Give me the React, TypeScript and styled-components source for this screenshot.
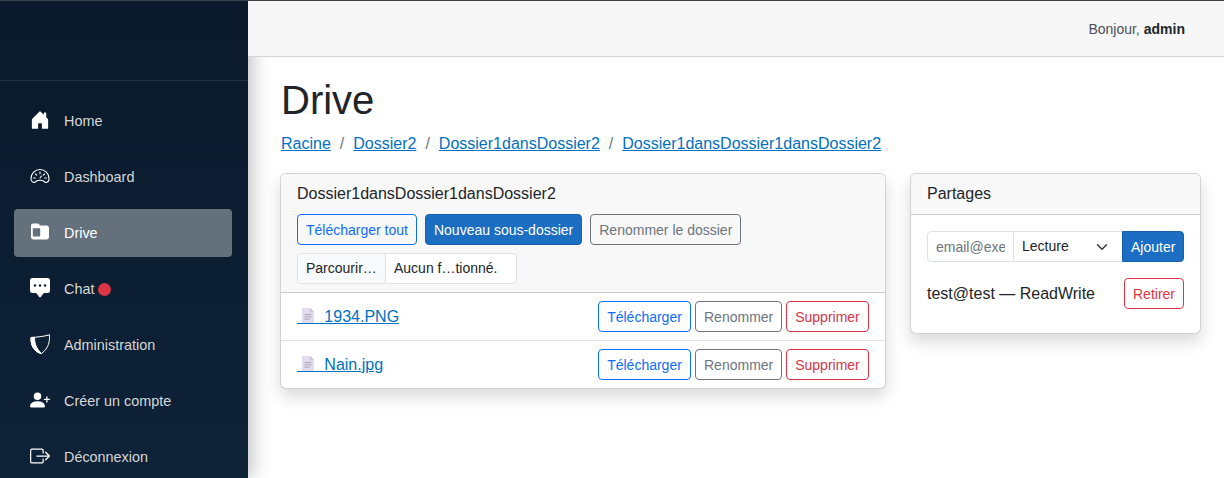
import { createGlobalStyle, styled } from 'styled-components';
import {
  BsBoxArrowRight,
  BsChatSquareDotsFill,
  BsHouseDoorFill,
  BsPersonPlusFill,
} from 'react-icons/bs';

const GlobalStyle = createGlobalStyle`
  html, body {
    margin: 0;
    height: 100%;
    overflow: hidden;
  }
  body {
    font-family: "Liberation Sans", Arial, sans-serif;
    font-size: 16px;
    line-height: 1.5;
    color: #212529;
    background: #fff;
  }
  * {
    box-sizing: border-box;
  }
`;

const Page = styled.div`
  display: flex;
  height: 478px;
  border-top: 1px solid #3a3f45;
  overflow: hidden;
`;

const Sidebar = styled.aside`
  position: relative;
  z-index: 1;
  flex: 0 0 248px;
  background: linear-gradient(180deg, #0a192b 0%, #0e2238 100%);
  box-shadow: 4px 0 18px rgba(0, 0, 0, 0.25);
`;

const Brand = styled.div`
  height: 80px;
  border-bottom: 1px solid rgba(255, 255, 255, 0.1);
`;

const Nav = styled.nav`
  display: flex;
  flex-direction: column;
  gap: 8px;
  padding: 16px 16px 0 14px;
`;

const NavItem = styled.a<{ $active?: boolean }>`
  display: flex;
  align-items: center;
  height: 48px;
  padding: 2px 0 0 16px;
  border-radius: 4px;
  font-size: 14.4px;
  color: ${(p) => (p.$active ? '#fff' : '#d7d7d7')};
  background: ${(p) => (p.$active ? 'rgba(255, 255, 255, 0.37)' : 'transparent')};
  text-decoration: none;
  svg {
    flex: none;
    width: 20px;
    height: 20px;
    margin: 0 14px 4px 0;
    color: #fff;
  }
`;

const Dot = styled.span`
  width: 13px;
  height: 13px;
  margin: 0 0 2px 4px;
  border-radius: 50%;
  background: #dc3545;
`;

const Content = styled.div`
  flex: 1;
  min-width: 0;
`;

const Topbar = styled.header`
  position: relative;
  z-index: 2;
  display: flex;
  align-items: center;
  justify-content: flex-end;
  height: 56px;
  padding: 2px 39px 0 0;
  background: #f7f7f7;
  border-bottom: 1px solid #d6d5d5;
  font-size: 14px;
  color: #495057;
  strong {
    margin-left: 4px;
    color: #212529;
  }
`;

const Main = styled.main`
  padding: 19px 23px 0 32px;
`;

const Title = styled.h1`
  margin: 0 0 8px;
  padding-left: 1px;
  font-size: 40px;
  font-weight: 500;
  line-height: 48px;
  color: #212529;
`;

const Crumbs = styled.ol`
  display: flex;
  margin: 0 0 17px;
  padding: 0 0 0 1px;
  list-style: none;
`;

const Crumb = styled.li`
  & + & {
    padding-left: 9px;
  }
  & + &::before {
    content: '/';
    padding-right: 9px;
    color: #6c757d;
  }
`;

const Link = styled.a`
  color: #0071c1;
  text-decoration: underline;
`;

const Columns = styled.div`
  display: grid;
  grid-template-columns: 606px 291px;
  gap: 24px;
  align-items: start;
`;

const Card = styled.section`
  border: 1px solid rgba(0, 0, 0, 0.175);
  border-radius: 6px;
  background: #fff;
  box-shadow: 0 8px 16px rgba(0, 0, 0, 0.15);
`;

const CardHeader = styled.div`
  padding: 8px 16px;
  background: #f8f8f8;
  border-bottom: 1px solid rgba(0, 0, 0, 0.175);
  border-radius: 5px 5px 0 0;
`;

const FolderName = styled.div`
  margin-bottom: 8px;
`;

const Toolbar = styled.div`
  display: flex;
  gap: 8px;
  margin-bottom: 8px;
`;

const Button = styled.button<{ $tone: 'primary' | 'outline' | 'muted' | 'danger' }>`
  height: 31px;
  padding: 0 8px;
  border-radius: 4px;
  font-family: inherit;
  font-size: 14px;
  line-height: 1;
  white-space: nowrap;
  background: ${(p) => (p.$tone === 'primary' ? '#1b6ec2' : 'transparent')};
  border: 1px solid
    ${(p) =>
      p.$tone === 'primary'
        ? '#1861ac'
        : p.$tone === 'outline'
          ? '#0d6efd'
          : p.$tone === 'muted'
            ? '#6c757d'
            : '#dc3545'};
  color: ${(p) =>
    p.$tone === 'primary'
      ? '#fff'
      : p.$tone === 'outline'
        ? '#0d6efd'
        : p.$tone === 'muted'
          ? '#6c757d'
          : '#dc3545'};
`;

const FilePicker = styled.div`
  display: flex;
  width: 220px;
  height: 31px;
  border: 1px solid #dee2e6;
  border-radius: 4px;
  background: #fff;
  font-size: 14px;
  line-height: 29px;
`;

const PickerButton = styled.span`
  width: 88px;
  padding-left: 8px;
  background: #f8f9fa;
  border-right: 1px solid #dee2e6;
  border-radius: 3px 0 0 3px;
`;

const PickerName = styled.span`
  padding-left: 8px;
`;

const FileRow = styled.div`
  display: flex;
  align-items: center;
  justify-content: space-between;
  padding: 8px 16px;
  & + & {
    border-top: 1px solid #dee2e6;
  }
`;

const IconSlot = styled.span`
  position: relative;
  letter-spacing: 22.9px;
  svg {
    position: absolute;
    left: 5px;
    top: 0;
    width: 12px;
    height: 15px;
  }
`;

const Actions = styled.div`
  display: grid;
  grid-template-columns: 93px 87px 83px;
  gap: 4px;
`;

const ShareHeader = styled.div`
  padding: 8px 16px;
  height: 41px;
  background: #f8f8f8;
  border-bottom: 1px solid rgba(0, 0, 0, 0.175);
  border-radius: 5px 5px 0 0;
`;

const ShareBody = styled.div`
  padding: 16px;
`;

const ShareForm = styled.div`
  display: grid;
  grid-template-columns: 87px 1fr 62px;
  height: 31px;
  margin-bottom: 16px;
`;

const EmailField = styled.input`
  min-width: 0;
  padding: 0 8px;
  border: 1px solid #dee2e6;
  border-radius: 4px 0 0 4px;
  font-family: inherit;
  font-size: 14px;
  color: #212529;
  &::placeholder {
    color: #6c757d;
    opacity: 1;
  }
`;

const RoleSelect = styled.div`
  display: flex;
  align-items: center;
  justify-content: space-between;
  padding: 0 12px 0 8px;
  border: 1px solid #dee2e6;
  border-width: 1px 0;
  font-size: 14px;
  svg {
    width: 16px;
    height: 12px;
    color: #343a40;
  }
`;

const AddButton = styled(Button)`
  border-radius: 0 4px 4px 0;
`;

const ShareRow = styled.div`
  display: flex;
  align-items: center;
  justify-content: space-between;
  margin-bottom: 8px;
`;

function GaugeIcon() {
  return (
    <svg viewBox="0 0 20 20" fill="none" stroke="currentColor" strokeWidth="1.1" strokeLinecap="round">
      <path d="M4.500 16.500C2.500 16.500 1 15 1 12.500C1 7.500 5 3.500 10 3.500S19 7.500 19 12.500C19 15 17.500 16.500 15.500 16.500C14 15 12 14.300 10 14.300S6 15 4.500 16.500Z" />
      <path d="M10 6v1.800M5.500 8l1.200 1.200M14.500 8l-1.200 1.200M3.600 12h1.700M16.400 12h-1.700M10 12l1.500-2" />
    </svg>
  );
}

function FolderIcon() {
  return (
    <svg viewBox="0 0 20 20" fill="currentColor">
      <path
        fillRule="evenodd"
        d="M1 3.500C1 2.200 2 1.500 3.200 1.500h4.300c.9 0 1.500.4 2 1.200l.5.800h6.500C18 3.500 19 4.500 19 6v9c0 1.500-1 2.500-2.500 2.500h-13C2 17.500 1 16.500 1 15zM2.800 6.500v6.800c0 .8.4 1.200 1.200 1.200h5c.8 0 1.200-.4 1.200-1.200V7.200c0-.7-.4-1-1-1H3.200c-.3 0-.4.100-.4.300z"
      />
    </svg>
  );
}

function ShieldIcon() {
  return (
    <svg viewBox="0 0 20 20" fill="none" stroke="currentColor" strokeWidth="1">
      <path d="M1 3.500C6 3.300 14 2.500 19.500.800C19.800 7 19 14 11.500 19.500C5 18.500.500 12 1 3.500Z" />
      <path d="M1 3.500C.5 12 5 18.500 11.500 19.500C8 16 4.500 12 4.500 3.300Z" fill="currentColor" />
    </svg>
  );
}

function DocIcon() {
  return (
    <svg viewBox="0 0 12 16" preserveAspectRatio="none">
      <path d="M0 0h8L12 4V16H0z" fill="#e2dcee" />
      <path d="M8 0L12 4H8z" fill="#c9c2d8" />
      <path d="M2.500 7h7M2.500 9.500h7M2.500 12h5" stroke="#a8a6b0" strokeWidth="1" />
    </svg>
  );
}

function Chevron() {
  return (
    <svg viewBox="0 0 16 16" fill="none" stroke="currentColor" strokeWidth="2" strokeLinecap="round" strokeLinejoin="round">
      <path d="m2 5 6 6 6-6" />
    </svg>
  );
}

const crumbs = ['Racine', 'Dossier2', 'Dossier1dansDossier2', 'Dossier1dansDossier1dansDossier2'];
const files = ['1934.PNG', 'Nain.jpg'];

export default function App() {
  return (
    <>
      <GlobalStyle />
      <Page>
        <Sidebar>
          <Brand />
          <Nav>
            <NavItem href="#"><BsHouseDoorFill />Home</NavItem>
            <NavItem href="#"><GaugeIcon />Dashboard</NavItem>
            <NavItem href="#" $active><FolderIcon />Drive</NavItem>
            <NavItem href="#"><BsChatSquareDotsFill />Chat<Dot /></NavItem>
            <NavItem href="#"><ShieldIcon />Administration</NavItem>
            <NavItem href="#"><BsPersonPlusFill />Créer un compte</NavItem>
            <NavItem href="#"><BsBoxArrowRight />Déconnexion</NavItem>
          </Nav>
        </Sidebar>
        <Content>
          <Topbar>
            Bonjour,<strong>admin</strong>
          </Topbar>
          <Main>
            <Title>Drive</Title>
            <Crumbs>
              {crumbs.map((c) => (
                <Crumb key={c}><Link href="#">{c}</Link></Crumb>
              ))}
            </Crumbs>
            <Columns>
              <Card>
                <CardHeader>
                  <FolderName>Dossier1dansDossier1dansDossier2</FolderName>
                  <Toolbar>
                    <Button $tone="outline">Télécharger tout</Button>
                    <Button $tone="primary">Nouveau sous-dossier</Button>
                    <Button $tone="muted">Renommer le dossier</Button>
                  </Toolbar>
                  <FilePicker>
                    <PickerButton>Parcourir…</PickerButton>
                    <PickerName>Aucun f…tionné.</PickerName>
                  </FilePicker>
                </CardHeader>
                {files.map((f) => (
                  <FileRow key={f}>
                    <Link href="#">
                      <IconSlot>{'\u00a0'}<DocIcon /></IconSlot>
                      {f}
                    </Link>
                    <Actions>
                      <Button $tone="outline">Télécharger</Button>
                      <Button $tone="muted">Renommer</Button>
                      <Button $tone="danger">Supprimer</Button>
                    </Actions>
                  </FileRow>
                ))}
              </Card>
              <Card>
                <ShareHeader>Partages</ShareHeader>
                <ShareBody>
                  <ShareForm>
                    <EmailField placeholder="email@exemple.com" />
                    <RoleSelect>Lecture<Chevron /></RoleSelect>
                    <AddButton $tone="primary">Ajouter</AddButton>
                  </ShareForm>
                  <ShareRow>
                    <span>test@test — ReadWrite</span>
                    <Button $tone="danger">Retirer</Button>
                  </ShareRow>
                </ShareBody>
              </Card>
            </Columns>
          </Main>
        </Content>
      </Page>
    </>
  );
}
